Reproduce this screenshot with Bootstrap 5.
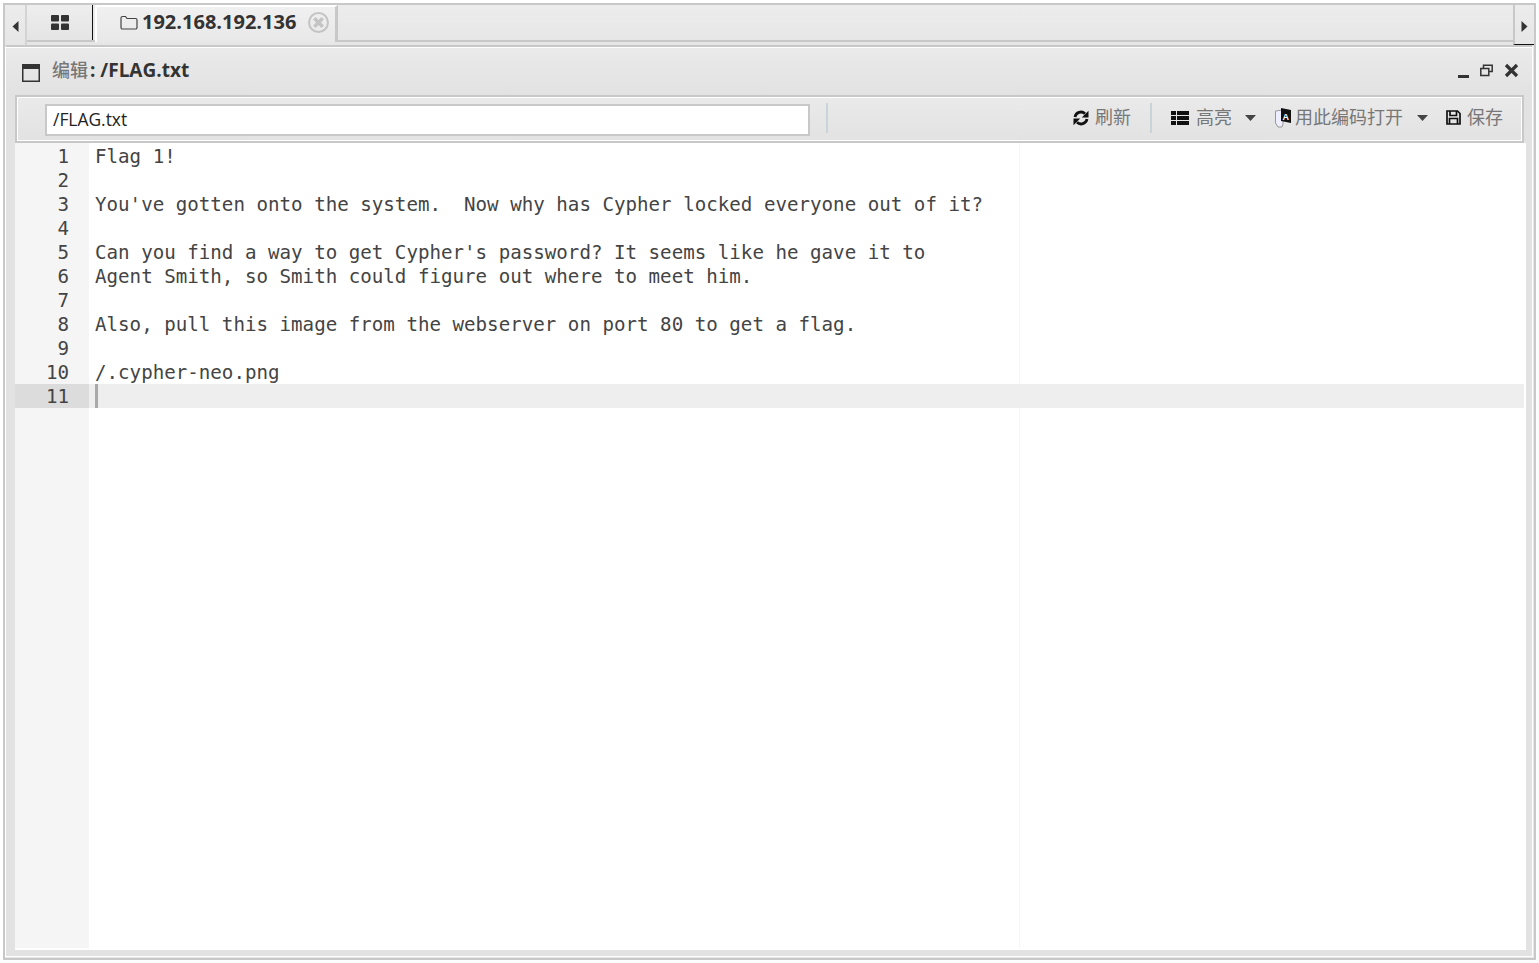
<!DOCTYPE html>
<html lang="zh">
<head>
<meta charset="utf-8">
<title>编辑</title>
<link href="https://cdn.jsdelivr.net/npm/bootstrap@5.3.0/dist/css/bootstrap.min.css" rel="stylesheet">
<style>
html,body{height:963px;overflow:hidden;background:#fff;}
body{font-family:"Open Sans","Noto Sans CJK SC",sans-serif;color:#333;padding:3px 3px 0 3px;}
.shell{height:957px;border:2px solid #c8c8c8;background:#e6e6e6;}
.tabrow{height:40px;background:linear-gradient(#ececec,#e6e6e6);}
.scrollbtn{width:22px;flex:none;border-right:2px solid #d4d4d4;}
.tabstrip{border-bottom:2px solid #c8c8c8;height:37px;}
.tabhome{width:66px;background:linear-gradient(#eee,#e4e4e4);border-right:1px solid #111;height:35px;}
.tabopen{width:243px;height:37px;margin-left:2px;border:2px solid #fff;border-bottom:0;border-right-color:#c8c8c8;border-right-width:3px;padding:0 0 5px 23px;font-size:20px;font-weight:700;color:#333;background:linear-gradient(#f0f0f0,#e8e8e8);white-space:nowrap;}
.tabfill{flex:1;}
.rightscroll{width:21px;flex:none;border-left:2px solid #c8c8c8;border-bottom:1px solid #111;}
.win{height:912px;margin-right:1px;border-top:2px solid #c8c8c8;border-left:1px solid #fff;border-right:1px solid #fff;border-bottom:1px solid #fff;background:#e2e2e2;padding:0 6px 0 9px;}
.wintop{height:48px;border-top:1px solid #fff;margin:0 -6px 0 -9px;padding:0 13px 3px 16px;background:linear-gradient(#eaeaea,#e2e2e2);}
.winicon{margin:5px 8px 0 0;}
.wintitle{font-size:19px;font-weight:700;color:#333;margin-left:4px;}
.wintitle .cjk{color:#777;font-weight:500;font-size:18px;margin-right:2px;}
.winctl{gap:11px;}
.toolbar{height:48px;margin-right:2px;border:2px solid #c8c8c8;background:linear-gradient(#eaeaea,#e2e2e2);box-shadow:inset 0 0 0 1px #fff;padding:0 19px 3px 28px;}
.pathbox{width:765px;height:32px;border:2px solid #c8c8c8;background:#fff;padding:0 6px;font-size:17.4px;color:#222;line-height:26px;margin-top:5px;}
.tsep{width:2px;height:30px;background:#c9d3da;}
.tsepwide{margin:0 19px 0 19px;}
.tbtn{font-size:18px;color:#777;white-space:nowrap;}
.gap-r6{margin-right:6px;}
.gap-r7{margin-right:7px;}
.gap-r4{margin-right:4px;}
.gap-l13{margin-left:13px;}
.gap-l14{margin-left:14px;}
.gap-l18{margin-left:18px;}
.gap-l19{margin-left:19px;}
.editor{height:805px;padding-top:1px;background:#fff;font-family:"DejaVu Sans Mono",monospace;font-size:19.17px;line-height:26px;color:#444;box-shadow:0 2px 0 #fff;}
.gutter{width:74px;background:#f5f5f5;margin-top:-1px;padding-top:1px;text-align:right;flex:none;}
.gutter div{padding-right:20px;height:24px;}
.gutter .on{background:#dcdcdc;}
.codepane{flex:1;min-width:0;margin-right:2px;position:relative;z-index:1;}
.codeline{height:24px;padding-left:6px;white-space:pre;}
.codeline.on{background:#eee;}
.caret{display:block;width:3px;height:24px;background:#a9a9a9;}
.pmargin{position:absolute;top:0;bottom:0;left:1004px;width:1px;background:#f6f6f6;}
</style>
</head>
<body>
<div class="shell">
  <div class="tabrow d-flex">
    <div class="scrollbtn d-flex justify-content-center pt-3"><svg width="7" height="11" viewBox="0 0 7 11"><path d="M6.500 0v11L.5 5.500z" fill="#333"/></svg></div>
    <div class="flex-grow-1 d-flex tabstrip">
      <div class="tabhome d-flex align-items-center justify-content-center"><svg width="18" height="15" viewBox="0 0 18 15"><g fill="#333"><rect width="8" height="6.500" rx="1"/><rect x="10" width="8" height="6.500" rx="1"/><rect y="8.500" width="8" height="6.500" rx="1"/><rect x="10" y="8.500" width="8" height="6.500" rx="1"/></g></svg></div>
      <div class="tabopen d-flex align-items-center gap-1">
        <svg width="18" height="15" viewBox="0 0 18 15" fill="none" stroke="#444" stroke-width="1.200"><path d="M1 3a1.500 1.500 0 0 1 1.500-1.500h3L7 3.500h8.500A1.500 1.500 0 0 1 17 5v7.500a1.500 1.500 0 0 1-1.500 1.500h-13A1.500 1.500 0 0 1 1 12.500z"/></svg>
        <span>192.168.192.136</span>
        <svg class="ms-2" width="21" height="21" viewBox="0 0 20 20"><circle cx="10" cy="10" r="9" fill="none" stroke="#c4c4c4" stroke-width="2"/><path d="M6 6l8 8m0-8l-8 8" stroke="#c4c4c4" stroke-width="3.400"/></svg>
      </div>
      <div class="tabfill"></div>
    </div>
    <div class="rightscroll d-flex justify-content-center pt-3"><svg width="7" height="11" viewBox="0 0 7 11"><path d="M.5 0v11l6-5.500z" fill="#333"/></svg></div>
  </div>
  <div class="win">
    <div class="wintop d-flex align-items-center">
      <svg class="winicon" width="18" height="18" viewBox="0 0 18 18"><rect x=".75" y=".75" width="16.500" height="16.500" fill="none" stroke="#333" stroke-width="1.500"/><rect width="18" height="5" fill="#333"/></svg>
      <div class="wintitle"><span class="cjk">编辑</span>: /FLAG.txt</div>
      <div class="ms-auto d-flex align-items-center winctl">
        <svg width="11" height="16" viewBox="0 0 11 16"><rect y="13" width="11" height="3" fill="#333"/></svg>
        <svg width="13" height="13" viewBox="0 0 13 13" fill="none" stroke="#333" stroke-width="1.500"><rect x=".8" y="4.500" width="8" height="7"/><path d="M3.500 4.500V1.300h8.700v6.200H9"/></svg>
        <svg width="15" height="15" viewBox="0 0 15 15"><path d="M2 2l11 11m0-11L2 13" stroke="#333" stroke-width="3.200"/></svg>
      </div>
    </div>
    <div class="toolbar d-flex align-items-center">
      <div class="pathbox">/FLAG.txt</div>
      <div class="tsep ms-3"></div>
      <div class="ms-auto d-flex align-items-center">
        <div class="tbtn d-flex align-items-center"><svg class="gap-r6" width="16" height="16" viewBox="0 0 16 16" fill="none" stroke="#111" stroke-width="2.800"><path d="M2 7a6 6 0 0 1 10-3.300"/><path d="M14 9a6 6 0 0 1-10 3.300"/><path d="M15.500.8v6.700H8.800zM.5 15.200V8.500h6.700z" fill="#111" stroke="none"/></svg>刷新</div>
        <div class="tsep tsepwide"></div>
        <div class="tbtn d-flex align-items-center"><svg class="gap-r7" width="18" height="14" viewBox="0 0 18 14" fill="#111"><rect width="5" height="4"/><rect x="6" width="12" height="4"/><rect y="5" width="5" height="4"/><rect x="6" y="5" width="12" height="4"/><rect y="10" width="5" height="4"/><rect x="6" y="10" width="12" height="4"/></svg>高亮<svg class="gap-l13" width="11" height="6" viewBox="0 0 11 6"><path d="M0 0h11L5.500 6z" fill="#444"/></svg></div>
        <div class="tbtn d-flex align-items-center gap-l19"><svg class="gap-r4" width="16" height="20" viewBox="0 0 16 20"><path d="M.5 3l7.500-1v14l-1 3H3L.5 15z" fill="#eef" stroke="#999" stroke-width="1"/><path d="M6 0l10 2v13l-10-2z" fill="#111"/><text x="7.500" y="11.500" font-size="9" fill="#fff" font-family="Liberation Sans" font-weight="700">A</text></svg><span>用此编码打开</span><svg class="gap-l14" width="11" height="6" viewBox="0 0 11 6"><path d="M0 0h11L5.500 6z" fill="#444"/></svg></div>
        <div class="tbtn d-flex align-items-center gap-l18"><svg class="gap-r6" width="15" height="15" viewBox="0 0 15 15" fill="none" stroke="#111" stroke-width="1.700"><path d="M1 1h10.500L14 3.500V14H1z"/><path d="M4 1v4.500h6.500V1M3.500 14V8.500h8V14"/></svg>保存</div>
      </div>
    </div>
    <div class="editor d-flex position-relative">
      <div class="gutter">
        <div>1</div><div>2</div><div>3</div><div>4</div><div>5</div><div>6</div><div>7</div><div>8</div><div>9</div><div>10</div><div class="on">11</div>
      </div>
      <div class="codepane">
        <div class="codeline">Flag 1!</div>
        <div class="codeline"></div>
        <div class="codeline">You've gotten onto the system.  Now why has Cypher locked everyone out of it?</div>
        <div class="codeline"></div>
        <div class="codeline">Can you find a way to get Cypher's password? It seems like he gave it to</div>
        <div class="codeline">Agent Smith, so Smith could figure out where to meet him.</div>
        <div class="codeline"></div>
        <div class="codeline">Also, pull this image from the webserver on port 80 to get a flag.</div>
        <div class="codeline"></div>
        <div class="codeline">/.cypher-neo.png</div>
        <div class="codeline on"><span class="caret"></span></div>
      </div>
      <div class="pmargin"></div>
    </div>
  </div>
</div>
</body>
</html>
